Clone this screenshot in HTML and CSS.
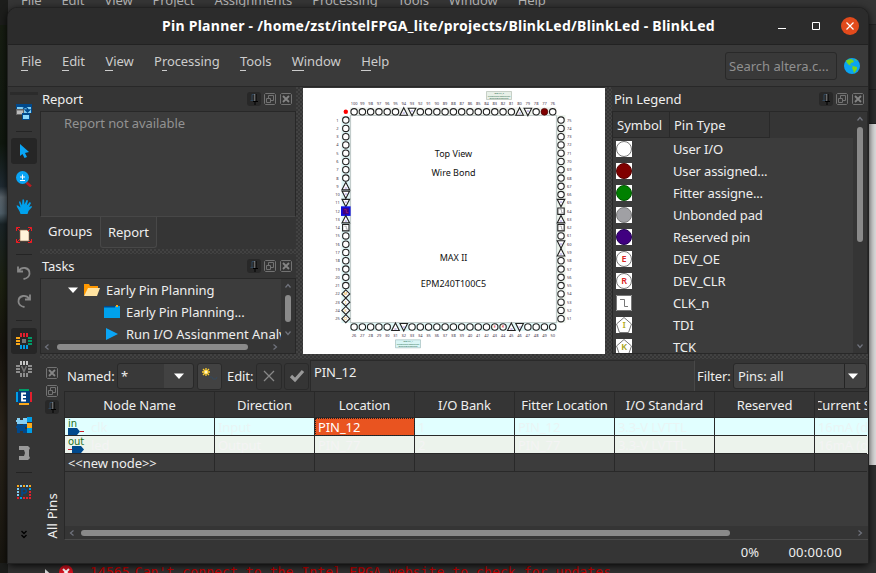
FILE: index.html
```html
<!DOCTYPE html>
<html lang="en">
<head>
<meta charset="utf-8">
<title>Pin Planner</title>
<link rel="stylesheet" href="styles.css">
</head>
<body>
<svg class="defs" width="0" height="0">
  <symbol id="pin" viewBox="0 0 14 14"><path d="M5 2.5v6M5 2.5h3M3.5 8.5h3" stroke="#31465a" fill="none"/><path d="M8 2v7" stroke="#aaa"/><path d="M9 2v7M6 9.5h5M8 9v4" stroke="#000" fill="none"/></symbol>
  <symbol id="float" viewBox="0 0 12 12"><path d="M1.5.5h9l1 1v9l-1 1h-9l-1-1v-9zM2.500 5.500h4v4h-4z" fill="none" stroke="#737373"/><path d="M4.500 5V2.500h5v5H7" fill="none" stroke="#737373"/></symbol>
  <symbol id="close" viewBox="0 0 12 12"><path d="M1.500.500h9l1 1v9l-1 1h-9l-1-1v-9z" fill="none" stroke="#737373"/><path d="M3 3l6 6M9 3l-6 6" stroke="#858585" stroke-width="1.800"/></symbol>
  <symbol id="left" viewBox="0 0 6 6"><path d="M4.500.500L1.500 3l3 2.500" fill="none" stroke="#70737d" stroke-width="1.200"/></symbol>
  <symbol id="right" viewBox="0 0 6 6"><path d="M1.500.500L4.500 3l-3 2.500" fill="none" stroke="#70737d" stroke-width="1.200"/></symbol>
  <symbol id="up" viewBox="0 0 6 6"><path d="M.500 4.500L3 1.500l2.500 3" fill="none" stroke="#70737d" stroke-width="1.200"/></symbol>
  <symbol id="down" viewBox="0 0 6 6"><path d="M.500 1.500L3 4.500l2.500-3" fill="none" stroke="#70737d" stroke-width="1.200"/></symbol>
</svg>

<div class="desktop">
  <div class="back-menu"><span>File</span><span>Edit</span><span>View</span><span>Project</span><span>Assignments</span><span>Processing</span><span>Tools</span><span>Window</span><span>Help</span></div>
  <div class="back-main"><div class="wallpaper"></div><div class="back-edge"><i class="e1"></i><i class="e2"></i><i class="e3"></i><i class="e4"></i></div></div>
  <div class="back-log">
    <svg width="8" height="12"><path d="M1 1l6 5.500L1 12z" fill="#ddd"/></svg>
    <svg class="err" width="14" height="14"><circle cx="7" cy="7" r="7" fill="#d8121f"/><path d="M4 4l6 6M10 4l-6 6" stroke="#fff" stroke-width="2"/></svg>
    <span class="num">14565</span><span>Can't connect to the Intel FPGA website to check for updates</span>
  </div>
</div>

<div class="window">
  <div class="title"><b>Pin Planner - /home/zst/intelFPGA_lite/projects/BlinkLed/BlinkLed - BlinkLed</b>
    <div class="controls">
      <svg width="8" height="20"><path d="M0 12.500h8" stroke="#fff"/></svg>
      <svg width="8" height="20"><path d="M.500 6.500h7v7h-7z" fill="none" stroke="#fff"/></svg>
      <svg width="18" height="18"><circle cx="9" cy="9" r="9" fill="#e24a1c"/><path d="M5.500 5.500l7 7M12.500 5.500l-7 7" stroke="#fff" stroke-width="1.200"/></svg>
    </div>
  </div>
  <div class="menubar">
    <nav><span><u>F</u>ile</span><span><u>E</u>dit</span><span><u>V</u>iew</span><span>P<u>r</u>ocessing</span><span><u>T</u>ools</span><span><u>W</u>indow</span><span><u>H</u>elp</span></nav>
    <div class="search">Search altera.c...</div>
    <svg class="globe" width="16" height="16"><circle cx="8" cy="8" r="8" fill="#0aa4f2"/><path d="M3 2l4-1 2 1 1 2-3 1-1 2 3 1 1 1-2-1-3-1-2-2-1-2zM9 8l4 1v2l-2 3-1 1-1-3-1-2zM11 1l2 1-1 1z" fill="#76d51c"/></svg>
  </div>
  <div class="body">
    <div class="tools">
      <i class="grip"></i>
      <span class="tool"><svg width="16" height="16"><path d="M0 0h16v9H0z" fill="#00498c"/><path d="M1 3h14v6H1z" fill="#7fcdf4"/><path d="M0 5h8v6H0z" fill="#666"/><path d="M1 6.500h6V10H1z" fill="#bbb"/><path d="M7 4.500Q11 2 12 6M9.500 6h4L11.500 8z" fill="none" stroke="#00498c" stroke-width="1.500"/><path d="M6 9h8v7H6z" fill="#00498c"/><path d="M7 11h6v4H7z" fill="#8bd7fb"/></svg></span>
      <i class="sep first"></i>
      <span class="tool on"><svg width="16" height="16"><path d="M4 1v12l2.500-2 2 4 2.500-1-2-4 4-1z" fill="#0aa5f5"/></svg></span>
      <span class="tool"><svg width="16" height="16"><path d="M10.500 11.500l4.500 4" stroke="#b51d20" stroke-width="2.500"/><circle cx="6.500" cy="6.500" r="6.500" fill="#0aa5f5"/><path d="M4 6h5M6.500 3.500v5M4 9.500h5" stroke="#fff" fill="none"/></svg></span>
      <span class="tool"><svg width="16" height="16"><path d="M4.500 15C4 12 1 9 .500 6.500l1.500 0 2.500 2L3 3l1-1 2 4.500L6.500.500 8 .500l.500 5L10.500 1l1.500.500-1.200 5 3-3.500 1.200 1-2 4 2.500-1 .500 1-3.500 4-1 3z" fill="#00a1ec"/></svg></span>
      <span class="tool"><svg width="16" height="16"><path d="M.500 4V.500H4M.500.500l4 4M12 .500h3.500V4M15.500.500l-4 4M.500 12v3.500H4M.500 15.500l4-4M12 15.500h3.500V12M15.500 15.500l-4-4" fill="none" stroke="#ed1c24"/><path d="M4 3h7l2 2v9H4z" fill="#fff3da" stroke="#8a6448" stroke-width=".600"/></svg></span>
      <i class="sep"></i>
      <span class="tool"><svg width="16" height="16"><path d="M2 1.500v5h5M2.500 6Q5 2.500 9 3q5 1 4.500 6-.500 4-6 5" fill="none" stroke="#888" stroke-width="1.800"/></svg></span>
      <span class="tool"><svg width="16" height="16"><path d="M14 1.500v5H9M13.500 6Q11 2.500 7 3 2 4 2.500 9q.500 4 6 5" fill="none" stroke="#888" stroke-width="1.800"/></svg></span>
      <i class="sep third"></i>
      <span class="tool on"><svg width="16" height="16"><path d="M5 0v4M8 0v4M11 0v4" stroke="#e41f2d" stroke-width="2"/><path d="M5 12v4M8 12v4M11 12v4" stroke="#009fe8" stroke-width="2"/><path d="M0 5h4M0 8h4M0 11h4" stroke="#fba919" stroke-width="2"/><path d="M12 5h4M12 8h4M12 11h4" stroke="#009b68" stroke-width="2"/><path d="M6 6h4v4H6z" fill="#777"/></svg></span>
      <span class="tool"><svg width="16" height="16"><path d="M5 0v4M8 0v4M11 0v4" stroke="#c5c5c5" stroke-width="2"/><path d="M5 12v4M8 12v4M11 12v4M0 5h4M0 8h4M0 11h4M12 5h4M12 8h4M12 11h4" stroke="#8e8e8e" stroke-width="2"/><path d="M5.500 5l2.500 5.500L10.500 5" fill="none" stroke="#777" stroke-width="1.500"/></svg></span>
      <span class="tool"><svg width="16" height="16"><path d="M3 0h10v2H3z" fill="#009b68"/><path d="M0 3h2v10H0z" fill="#009fe8"/><path d="M14 3h2v10h-2z" fill="#e41f2d"/><path d="M3 14h10v2H3z" fill="#fba919"/><path d="M2 2h12v12H2z" fill="#003d7d"/><path d="M10 4.500H6v7h4M6 8h4" fill="none" stroke="#fff" stroke-width="1.800"/></svg></span>
      <span class="tool"><svg width="16" height="16"><path d="M1 1h3v2h3V1h4v6H1V5H0V3h1z" fill="#86cff3"/><path d="M11 0h5v5h-5zM11 11h5v5h-5z" fill="#009fe8"/><path d="M11 6h5v5h-5z" fill="#fba919"/><path d="M1 7h3v1h3V7h4v3H9v2h2v4H7v-2H4v2H1v-5H0V9h1z" fill="#00498c"/></svg></span>
      <span class="tool"><svg width="16" height="16"><path d="M3 1h9l2 2-1 2v6l1 2-2 2H3v-4h5l1-3-1-3H3z" fill="#999"/></svg></span>
      <i class="sep last"></i>
      <span class="tool"><svg width="16" height="16" fill="none" stroke-width="2"><path d="M1 2h14" stroke="#fba919" stroke-dasharray="2 4"/><path d="M4 2h11" stroke="#7fcdf4" stroke-dasharray="2 4"/><path d="M1 14h14" stroke="#e41f2d" stroke-dasharray="2 1"/><path d="M2 4v8" stroke="#7fcdf4" stroke-dasharray="2 1"/><path d="M14 4v8" stroke="#e41f2d" stroke-dasharray="2 1"/><path d="M4 14h2M13 5h2" stroke="#009fe8"/><path d="M6 12V5h3q3 2 0 4H6" stroke="#00498c" stroke-width="1.600"/></svg></span>
      <svg class="more" width="6" height="9"><path d="M.500 1L3 3.500 5.500 1M.500 5L3 7.500 5.500 5" fill="none" stroke="#000" stroke-width="1.400"/></svg>
    </div>
    <div class="work">
      <div class="upper">
        <div class="left">
          <div class="dock-head"><span>Report</span><svg class="pinbtn" width="14" height="14"><use href="#pin"/></svg><svg width="12" height="12"><use href="#float"/></svg><svg width="12" height="12"><use href="#close"/></svg></div>
          <div class="report">Report not available</div>
          <div class="tabs"><span>Groups</span><span class="active">Report</span></div>
          <div class="split-h"></div>
          <div class="dock-head"><span>Tasks</span><svg class="pinbtn" width="14" height="14"><use href="#pin"/></svg><svg width="12" height="12"><use href="#float"/></svg><svg width="12" height="12"><use href="#close"/></svg></div>
          <div class="tree">
            <div class="tree-view">
              <div class="rows">
                <div class="row r1"><svg width="10" height="6"><path d="M0 .500h10L5 6z" fill="#fff"/></svg><svg width="16" height="13"><path d="M0 12V0h5l1 2h8v4H4z" fill="#ff9800"/><path d="M4 4h12l-3 8H0z" fill="#ffe3a0"/></svg><span>Early Pin Planning</span></div>
                <div class="row r2"><svg width="16" height="14"><path d="M0 1h16v12H0z" fill="#00a1ec"/><path d="M0 1h11v1.500H0z" fill="#00498c"/><path d="M12 0h2v2h-2z" fill="#fba919"/></svg><span>Early Pin Planning...</span></div>
                <div class="row r3"><svg width="12" height="12"><path d="M0 0l12 6-12 6z" fill="#0aa5f5"/></svg><span>Run I/O Assignment Analy</span></div>
              </div>
              <div class="vbar"><svg width="6" height="6"><use href="#up"/></svg><i></i><svg width="6" height="6"><use href="#down"/></svg></div>
            </div>
            <div class="hbar"><svg width="6" height="6"><use href="#left"/></svg><i></i><svg width="6" height="6"><use href="#right"/></svg></div>
          </div>
        </div>
        <div class="split-v"></div>
        <svg id="chip" class="chip" viewBox="303 88 302 266" width="302" height="266"></svg>
        <div class="split-v"></div>
        <div class="legend">
          <div class="dock-head"><span>Pin Legend</span><svg class="pinbtn" width="14" height="14"><use href="#pin"/></svg><svg width="12" height="12"><use href="#float"/></svg><svg width="12" height="12"><use href="#close"/></svg></div>
          <div class="legend-view">
            <div class="legend-list">
              <div class="legend-head"><span>Symbol</span><span>Pin Type</span></div>
              <div class="lrow"><svg width="16" height="16"><circle cx="8" cy="8" r="7.500" fill="#fff" stroke="#777"/></svg>User I/O</div>
              <div class="lrow"><svg width="16" height="16"><circle cx="8" cy="8" r="7.500" fill="#800000" stroke="#500"/></svg>User assigned...</div>
              <div class="lrow"><svg width="16" height="16"><circle cx="8" cy="8" r="7.500" fill="#008000" stroke="#050"/></svg>Fitter assigne...</div>
              <div class="lrow"><svg width="16" height="16"><circle cx="8" cy="8" r="7.500" fill="#a0a0a4" stroke="#777"/></svg>Unbonded pad</div>
              <div class="lrow"><svg width="16" height="16"><circle cx="8" cy="8" r="7.500" fill="#400080" stroke="#205"/></svg>Reserved pin</div>
              <div class="lrow"><svg width="16" height="16"><circle cx="8" cy="8" r="7.500" fill="#fff" stroke="#777"/><text x="8" y="11" fill="#d92626">E</text></svg>DEV_OE</div>
              <div class="lrow"><svg width="16" height="16"><circle cx="8" cy="8" r="7.500" fill="#fff" stroke="#777"/><text x="8" y="11" fill="#d92626">R</text></svg>DEV_CLR</div>
              <div class="lrow"><svg width="16" height="16"><path d="M.500.500h15v15H.500zM4 4.500h4.500v7H12" fill="none" stroke="#777"/></svg>CLK_n</div>
              <div class="lrow"><svg width="16" height="16"><path d="M8 .500L15.500 7l-3 8.500h-9L.500 7z" fill="none" stroke="#777"/><text x="8" y="11" fill="#b5ad1c">I</text></svg>TDI</div>
              <div class="lrow"><svg width="16" height="16"><path d="M8 .500L15.500 7l-3 8.500h-9L.500 7z" fill="none" stroke="#777"/><text x="8" y="11" fill="#a5a010">K</text></svg>TCK</div>
            </div>
            <div class="vbar"><svg width="6" height="6"><use href="#up"/></svg><i></i><svg width="6" height="6"><use href="#down"/></svg></div>
          </div>
        </div>
      </div>
      <div class="split-h"></div>
      <div class="lower">
        <div class="strip"><svg width="12" height="12"><use href="#close"/></svg><svg width="12" height="12"><use href="#float"/></svg><svg class="pinbtn" width="14" height="14"><use href="#pin"/></svg><span>All Pins</span></div>
        <div class="pins">
          <div class="bar">
            <span class="named">Named:</span>
            <div class="combo c1"><span>*</span><svg width="10" height="6"><path d="M0 .500h10L5 6z" fill="#fff"/></svg></div>
            <div class="btn star"><svg width="18" height="18"><path d="M5 1v8M1 5h8M2 2l6 6M8 2L2 8" stroke="#ffd02f" stroke-width="1.300"/><circle cx="5" cy="5" r="1.500" fill="#fff6c8"/><path d="M8 10h3l1 2h3l1-2" fill="none" stroke="#34495d"/></svg></div>
            <span class="edit">Edit:</span>
            <div class="btn no"><svg width="12" height="12"><path d="M1 1l10 10M11 1L1 11" stroke="#888" stroke-width="1.300"/></svg></div>
            <div class="btn yes"><svg width="16" height="14"><path d="M2 7l4 4 8-9" fill="none" stroke="#999" stroke-width="3.200"/></svg></div>
            <div class="field">PIN_12</div>
            <span class="filter">Filter:</span>
            <div class="combo c2"><span>Pins: all</span><svg width="10" height="6"><path d="M0 .500h10L5 6z" fill="#fff"/></svg></div>
          </div>
          <div class="grid">
            <div class="tr th"><span>Node Name</span><span>Direction</span><span>Location</span><span>I/O Bank</span><span>Fitter Location</span><span>I/O Standard</span><span>Reserved</span><span class="cut">Current S</span></div>
            <div class="tr in"><span class="node"><svg width="17" height="17"><text x="0" y="8.500">in</text><path d="M0 10h9l3 3.500-3 3.500H0z" fill="#00498c"/><path d="M12 13.500h4" stroke="#ce2029"/></svg>clk</span><span>Input</span><span class="sel">PIN_12</span><span>1</span><span>PIN_12</span><span>3.3-V LVTTL</span><span></span><span>16mA (default)</span></div>
            <div class="tr out"><span class="node"><svg width="17" height="17"><text x="0" y="8.500">out</text><path d="M4 10h9l3 3.500-3 3.500H4z" fill="#00498c"/><path d="M0 13.500h4" stroke="#ce2029"/></svg>led</span><span>Output</span><span>PIN_77</span><span>2</span><span>PIN_77</span><span>3.3-V LVTTL</span><span></span><span>16mA (default)</span></div>
            <div class="tr new"><span>&lt;&lt;new node&gt;&gt;</span><span></span><span></span><span></span><span></span><span></span><span></span><span></span></div>
          </div>
          <div class="hbar"><svg width="6" height="6"><use href="#left"/></svg><i></i><svg width="6" height="6"><use href="#right"/></svg></div>
        </div>
      </div>
    </div>
  </div>
  <div class="status"><span>0%</span><span>00:00:00</span></div>
</div>
<script src="chip.js"></script>
</body>
</html>
```
FILE: styles.css
```css
* { box-sizing: border-box; }
body { margin: 0; width: 876px; height: 573px; overflow: hidden; background: #1c1d1b; color: #eee; font: 13px/18px "Noto Sans", sans-serif; letter-spacing: -0.08px; }
svg { display: block; flex: none; }
.defs { position: absolute; }
span { white-space: nowrap; }

.desktop { height: 573px; display: flex; flex-direction: column; }
.back-menu { height: 25px; margin-left: 8px; padding-left: 13px; background: #353535; border-bottom: 1px solid #242424; display: flex; gap: 20px; color: #b4b4b4; line-height: 0; }
.back-main { flex: 1; min-height: 0; display: flex; justify-content: space-between; }
.wallpaper { width: 8px; background: linear-gradient(#171d12, #10180f 22%, #202b33 30%, #59636b 32%, #50606a 35%, #1b2528 37%, #1d2211 48%, #17140e 60%, #2b241a 75%, #17150f); }
.back-edge { width: 8px; display: flex; flex-direction: column; }
.back-edge .e1 { height: 65px; background: #2d2d2d; border-bottom: 1px solid #202020; }
.back-edge .e2 { height: 34px; background: #2d2d2d; border-bottom: 1px solid #202020; }
.back-edge .e3 { height: 341px; background: #dcdcdc; }
.back-edge .e4 { flex: 1; background: #2e2e2e; }
.back-log { height: 10px; overflow: hidden; margin-left: 8px; background: #303030; display: flex; padding: 5px 0 0 36px; color: #c40000; font: 13.2px/9px "DejaVu Sans Mono", monospace; letter-spacing: 0; }
.back-log .err { margin: -3px 0 0 7px; }
.back-log .num { margin: 0 5px 0 17px; }

.window { position: absolute; left: 8px; top: 8px; width: 860px; height: 555px; display: flex; flex-direction: column; background: #353535; border-radius: 9px 9px 0 0; box-shadow: 0 0 0 1px #222, 0 2px 8px #000; overflow: hidden; }
.title { height: 37px; background: #2c2c2c; border-bottom: 1px solid #222; display: flex; align-items: center; padding: 0 9px 0 154px; justify-content: space-between; color: #fff; font-size: 14px; letter-spacing: .27px; }
.title b { white-space: nowrap; }
.controls { display: flex; align-items: center; gap: 26px; }
.controls svg:last-child { margin-left: -5px; }
.menubar { height: 42px; background: #3a3a3a; border-bottom: 1px solid #282828; display: flex; align-items: flex-start; }
nav { display: flex; gap: 20.5px; padding: 7px 0 0 13px; flex: 1; color: #ccc; }
nav u { text-decoration: none; border-bottom: 1px solid #ccc; }
.search { width: 112px; height: 28px; margin-top: 7px; border: 1px solid #292929; border-radius: 3px; background: #393939; color: #909090; padding: 4px 3px; letter-spacing: 0; }
.globe { margin: 13px 8px 0 7px; }

.body { height: 454px; display: flex; }
.tools { width: 32px; display: flex; flex-direction: column; align-items: center; }
.grip { width: 28px; height: 3px; background: #2b2b2b; margin: 5px 0 3px; }
.tool { width: 26px; height: 26px; margin: 1px 0; border-radius: 3px; display: grid; place-items: center; flex: none; }
.tool.on { background: #262626; }
.sep { width: 16px; height: 1px; background: #242424; margin: 5px 0 4px; }
.sep.first { margin: 5px 0; }
.sep.third { margin: 5px 0 6px; }
.sep.last { margin: 5px 0; }
.more { margin-top: 24px; }
.work { width: 828px; display: flex; flex-direction: column; }
.upper { height: 267px; display: flex; }
.left { width: 256px; display: flex; flex-direction: column; }
.dock-head { height: 24px; flex: none; display: flex; align-items: center; padding: 0 4px 0 2px; gap: 4px; }
.dock-head span { flex: 1; }
.dock-head .pinbtn { margin-right: -1px; }
.pinbtn { background: #282828; border-radius: 3px; }
.report { height: 106px; background: #3c3c3c; border: 1px solid #282828; border-bottom-color: #474747; padding: 2px 23px; color: #929292; }
.tabs { height: 32px; display: flex; }
.tabs span { padding: 5px 8px; height: 29px; width: 60px; }
.tabs .active { width: 57px; background: #393939; border: 1px solid #484848; border-top: 0; height: 31px; border-radius: 0 0 3px 3px; padding: 6px 7px; }
.split-h { height: 5px; flex: none; background: conic-gradient(#424242 25%, transparent 0 50%, #424242 0 75%, transparent 0) 0 0 / 4px 4px; }
.split-v { width: 7px; background: conic-gradient(#424242 25%, transparent 0 50%, #424242 0 75%, transparent 0) 2px 0 / 4px 4px; }
.tree { height: 76px; background: #393939; border: 1px solid #282828; }
.tree-view { height: 61px; display: flex; overflow: hidden; background: #3c3c3c; }
.rows { flex: 1; min-width: 0; overflow: hidden; }
.row { height: 22px; display: flex; align-items: center; }
.r1 { padding-left: 27px; } .r1 svg + svg { margin: 0 6px; }
.r2 { padding-left: 63px; } .r2 span { margin-left: 6px; }
.r3 { padding-left: 65px; } .r3 span { margin-left: 8px; letter-spacing: 0; }
.vbar { width: 14px; background: #353535; display: flex; flex-direction: column; align-items: center; padding: 4px 0; flex: none; }
.vbar i { width: 6px; border-radius: 3px; background: #8a8a8a; }
.tree .vbar i { height: 28px; margin: 6px 0 8px; }
.hbar { height: 13px; background: #353535; display: flex; align-items: center; padding: 0 3px; flex: none; }
.hbar i { height: 6px; border-radius: 3px; background: #8a8a8a; }
.tree .hbar i { width: 191px; margin: 0 24px 0 7px; }
.chip { background: #fff; margin-top: 1px; }
.chip text { text-anchor: middle; font: 9px "Noto Sans", sans-serif; letter-spacing: 0; fill: #111; }
.chip .n { font-size: 4px; fill: #43354a; }
.chip .s { font-size: 3.8px; fill: #7158c8; }
.chip .t { font-size: 2px; fill: #264; }

.legend { width: 256px; display: flex; flex-direction: column; }
.legend-view { flex: 1; min-height: 0; display: flex; border: 1px solid #282828; overflow: hidden; background: #3c3c3c; }
.legend-list { flex: 1; overflow: hidden; letter-spacing: -0.15px; }
.legend-head { height: 26px; background: #353535; display: flex; line-height: 26px; letter-spacing: 0; }
.legend-head span { width: 57px; padding-left: 4px; border-right: 1px solid #292929; border-bottom: 1px solid #292929; }
.legend-head span + span { width: 100px; }
.lrow { height: 22px; display: flex; align-items: center; gap: 41px; padding-left: 3px; }
.lrow svg { background: #fff; }
.lrow text { font: 600 9px "Noto Sans", sans-serif; text-anchor: middle; }
.legend .vbar { justify-content: space-between; }
.legend .vbar i { height: 115px; margin-bottom: 96px; }

.lower { flex: 1; min-height: 0; display: flex; }
.strip { width: 24px; display: flex; flex-direction: column; align-items: center; padding-top: 8px; gap: 6px; }
.strip .pinbtn { margin-top: -3px; }
.strip span { writing-mode: vertical-rl; transform: rotate(180deg); margin: auto 0 3px; letter-spacing: .2px; }
.pins { flex: 1; min-width: 0; border-left: 1px solid #282828; display: flex; flex-direction: column; background: #3c3c3c; border-bottom: 1px solid #4a4a4a; margin-bottom: 1px; }
.bar { height: 32px; flex: none; display: flex; align-items: center; background: #353535; padding: 2px 1px 0 2px; margin-left: -1px; }
.bar > span { flex: none; }
.named { width: 50px; margin-left: 1px; }
.combo { height: 26px; border: 1px solid #292929; border-radius: 3px; background: #424242; display: flex; align-items: center; justify-content: space-between; flex: none; }
.c1 { width: 77px; padding: 0 9px 0 3px; background: linear-gradient(90deg, #393939 46px, #424242 0); }
.c2 { width: 134px; margin-left: auto; padding: 0 8px 0 4px; background: linear-gradient(90deg, #424242 110px, #242424 0 111px, #424242 0); }
.btn { height: 27px; border: 1px solid #2a2a2a; border-radius: 3px; display: grid; place-items: center; flex: none; }
.star { width: 25px; margin: 0 5px 0 3px; background: #424242; }
.edit { width: 29px; }
.no { width: 26px; }
.yes { width: 25px; margin-left: 2px; }
.field { width: 385px; height: 32px; margin-left: 1px; background: #3a3a3a; border: 1px solid #2a2a2a; padding: 2px 3px; border-right-color: #484848; margin-right: 2px; }
.grid { flex: none; }
.tr { display: grid; grid-template-columns: 150px repeat(6, 100px) 52px; height: 18px; }
.tr span { border-right: 1px solid #292929; border-bottom: 1px solid #292929; padding-left: 3px; overflow: hidden; line-height: 18px; }
.tr span:last-child { border-right: 0; }
.tr.th { height: 27px; background: #353535; border-top: 1px solid #282828; }
.th span { text-align: center; line-height: 27px; padding: 0; }
.tr .cut { display: flex; justify-content: center; margin-left: 3px; }
.in { background: #e1ffff; color: #e9f5f5; }
.out { background: #ecf3ec; color: #f4f4f4; }
.tr .node { display: flex; gap: 6px; }
.node text { font: 10px "DejaVu Sans", sans-serif; fill: #1c701c; }
.tr .sel { background: #e95420; color: #fff; outline: 1px dotted #222; outline-offset: -1px; }
.pins > .hbar { margin-top: auto; padding: 0 4px; }
.pins .hbar i { width: 649px; margin: 0 127px 0 6px; }
.status { flex: 1; display: flex; gap: 29px; justify-content: flex-end; align-items: center; padding-right: 26px; letter-spacing: .25px; }
```
FILE: chip.js
```js
const pitch = 8.275;
const kinds = {
  9: "up", 10: "down", 11: "down", 12: "selected", 13: "up", 14: "square",
  22: "diamond", 23: "diamond", 24: "diamond", 25: "diamond",
  31: "up", 32: "down", 45: "up", 46: "down", 59: "up", 60: "down",
  62: "square", 63: "up", 64: "square", 65: "down", 77: "assigned",
  79: "down", 80: "up", 93: "down", 94: "up", 43: "E", 44: "R"
};
const marks = { 22: "M", 23: "I", 24: "K", 25: "O" };

function pinShape(n, x, y) {
  const kind = kinds[n];
  const line = 'fill="#fff" stroke="#222" stroke-width="1.1"';
  const poly = d => `<path d="${d}" ${line}/>`;
  if (kind === "up") return poly(`M${x} ${y - 4}l3.800 7.500h-7.600z`) + `<text class="s" x="${x}" y="${y + 2.6}">o</text>`;
  if (kind === "down") return poly(`M${x} ${y + 4}l3.800 -7.500h-7.600z`) + `<text class="s" x="${x}" y="${y + 0.6}">o</text>`;
  if (kind === "square") return poly(`M${x - 3.2} ${y - 3.2}h6.400v6.400h-6.400z`) + `<path d="M${x - 1.5} ${y - 1.5}h2v3h2" fill="none" stroke="#888" stroke-width=".6"/>`;
  if (kind === "selected") return `<rect x="${x - 4.8}" y="${y - 4.8}" width="9.6" height="9.6" fill="#1010e0"/><path d="M${x - 3} ${y - 3}h6v6h-6z" fill="#400080"/><path d="M${x - 1.5} ${y - 1.5}h2v3h2" fill="none" stroke="#a03070" stroke-width=".7"/>`;
  if (kind === "diamond") return poly(`M${x} ${y - 4}l4 4l-4 4l-4 -4z`) + `<text class="s" x="${x}" y="${y + 1.4}" style="fill:#d8a020">${marks[n]}</text>`;
  if (kind === "assigned") return `<circle cx="${x}" cy="${y}" r="3.4" fill="#800000" stroke="#400" stroke-width=".7"/>`;
  let out = `<circle cx="${x}" cy="${y}" r="3.2" ${line}/>`;
  if (kind) out += `<text class="s" x="${x}" y="${y + 1.4}" style="fill:#d02020">${kind}</text>`;
  return out;
}

let svg = `
<path d="M350 107.500h206.500v8H350z" fill="#eef2ec"/>
<path d="M557 115h8.500v208H557z" fill="#ecf3ec"/>
<path d="M341.500 116h9v207h-9zM350 323h207v8H350z" fill="#dff6f6"/>
<path d="M350.500 115.500h206v207h-206z" fill="#fff" stroke="#c2cccb" stroke-width="1.200"/>
<circle cx="345.800" cy="111.800" r="2.200" fill="#f00"/>
<path d="M486.500 91.500h25v8h-25z" fill="#e8f0e8" stroke="#aab5aa" stroke-width=".6"/>
<path d="M395.500 339.800h25v8h-25z" fill="#d9f5f5" stroke="#99b5b5" stroke-width=".6"/>
<text class="t" x="499" y="94">IOBANK_2</text><text class="t" x="499" y="96.500">Unassigned/Configured</text><text class="t" x="499" y="98.800">Output/Bidirectional</text>
<text class="t" x="408" y="342.200">IOBANK_1</text><text class="t" x="408" y="344.600">Unassigned/Configured</text><text class="t" x="408" y="347">Output/Bidirectional</text>
<text x="453.500" y="157">Top View</text><text x="453.500" y="176">Wire Bond</text>
<text x="453.500" y="261">MAX II</text><text x="453.500" y="287">EPM240T100C5</text>`;

for (let i = 0; i < 25; i++) {
  const x = 354.1 + i * pitch, y = 120.1 + i * pitch;
  svg += pinShape(1 + i, 345.8, y) + `<text class="n" x="337.5" y="${y + 1.5}">${1 + i}</text>`;
  svg += pinShape(26 + i, x, 327) + `<text class="n" x="${x}" y="337">${26 + i}</text>`;
  svg += pinShape(75 - i, 561, y) + `<text class="n" x="569.3" y="${y + 1.5}">${75 - i}</text>`;
  svg += pinShape(100 - i, x, 111.8) + `<text class="n" x="${x}" y="104.800">${100 - i}</text>`;
}
document.getElementById("chip").innerHTML = svg;
```
